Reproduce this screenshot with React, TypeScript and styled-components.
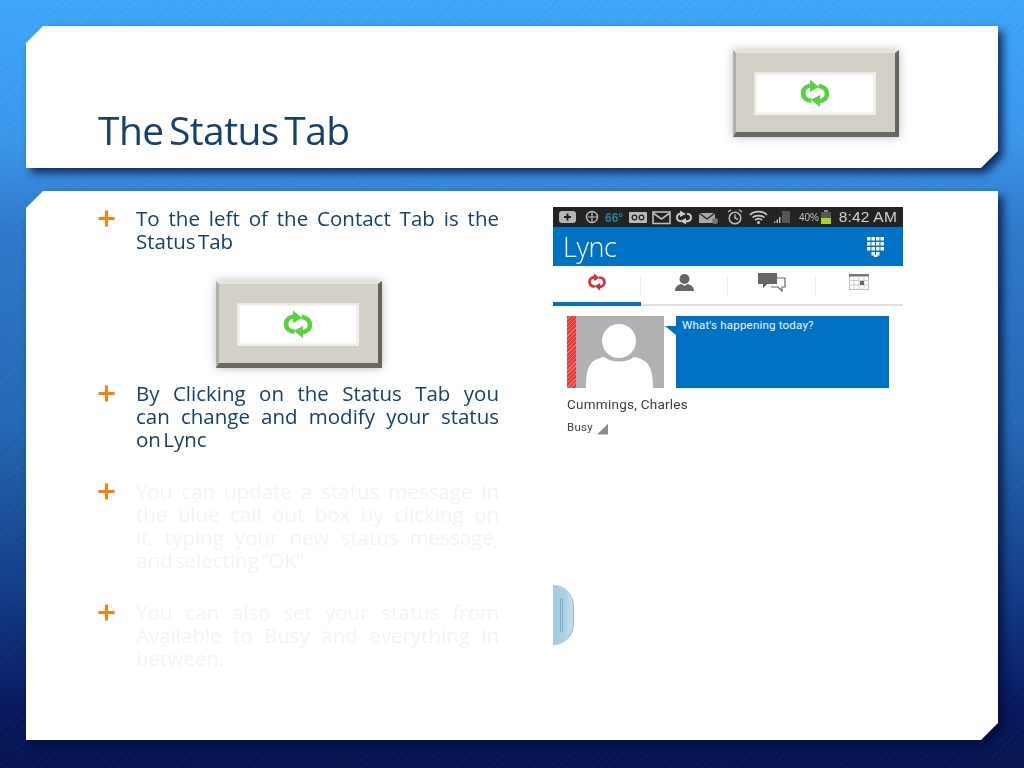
import React from "react";
import styled, { createGlobalStyle } from "styled-components";

const Global = createGlobalStyle`
  html, body { margin: 0; padding: 0; width: 1024px; height: 768px; overflow: hidden; }
  * { box-sizing: border-box; }
`;

const Stage = styled.div`
  width: 1024px;
  height: 768px;
  padding: 26px;
  display: flex;
  flex-direction: column;
  gap: 23px;
  font-family: "Open Sans", "Liberation Sans", sans-serif;
  background:
    repeating-linear-gradient(135deg, rgba(255,255,255,0.012) 0 3px, rgba(0,0,0,0.012) 3px 6px),
    linear-gradient(180deg, #3ea6fb 0%, #3b97ec 18%, #2f78cb 30%, #2468b5 55%, #123a86 78%, #07185f 92%, #061550 100%);
`;

const Shadow = styled.div`
  filter: drop-shadow(5px 5px 4px rgba(0, 10, 50, 0.75));
`;

const Card = styled.div<{ $h: number }>`
  height: ${(p) => p.$h}px;
  background: #fff;
  clip-path: polygon(17px 0, 100% 0, 100% calc(100% - 17px), calc(100% - 17px) 100%, 0 100%, 0 17px);
`;

const TitleRow = styled(Card)`
  padding: 24px 99px 0 72px;
  display: flex;
  justify-content: space-between;
`;

const Title = styled.h1`
  margin: 53px 0 0;
  font-size: 39px;
  line-height: 54px;
  font-weight: 400;
  color: #17406d;
  letter-spacing: -0.6px;
  word-spacing: -4px;
  white-space: nowrap;
`;

const Frame = styled.div`
  width: 166px;
  height: 87px;
  flex: none;
  padding: 19px 19px 17px 18px;
  background: #d3d1c7;
  border-style: solid;
  border-width: 3px 4px 5px 3px;
  border-color: #e6e4da #66655c #6a695f #b4b2a7;
  box-shadow: 0 0 9px rgba(60, 60, 60, 0.35);
`;

const Window = styled.div`
  width: 100%;
  height: 100%;
  background: #fff;
  border: 2px solid;
  border-color: #ebe9e2 #f1efe9 #f1efe9 #ebe9e2;
  box-shadow: inset 0 0 2px #d8d6cc;
  display: flex;
  align-items: center;
  justify-content: center;
`;

const Sync = ({ color, size }: { color: string; size: number }) => (
  <svg width={size} height={size * 0.9} viewBox="0 0 32 29" aria-hidden="true">
    <path d="M13.5 6.5 C 8 6.5 4 9.5 4 14 C 4 18.5 7.5 21.5 12.5 22" fill="none" stroke={color} strokeWidth="4.6" />
    <path d="M18.5 22.5 C 24 22.5 28 19.5 28 15 C 28 10.5 24.5 7.5 19.5 7" fill="none" stroke={color} strokeWidth="4.6" />
    <path d="M11 0.5 L20 8 L11 13 Z" fill={color} />
    <path d="M21 28.5 L12 21 L21 16 Z" fill={color} />
  </svg>
);

const Body = styled(Card)`
  padding: 16px 95px 0 72px;
  display: flex;
  gap: 54px;
`;

const Bullets = styled.div`
  width: 401px;
  flex: none;
`;

const Item = styled.div<{ $gap?: number }>`
  display: flex;
  margin-top: ${(p) => p.$gap ?? 0}px;
`;

const Plus = styled.svg`
  width: 17px;
  height: 17px;
  flex: none;
  margin: 3px 21px 0 0;
  color: #f5820f;
`;

const Lines = styled.div<{ $ghost?: boolean }>`
  flex: 1;
  min-width: 0;
  font-size: 20.5px;
  line-height: 23px;
  color: ${(p) => (p.$ghost ? "#f3f3f3" : "#17406d")};
`;

const Line = styled.span<{ $last?: boolean }>`
  display: block;
  white-space: nowrap;
  text-align: justify;
  text-align-last: ${(p) => (p.$last ? "left" : "justify")};
  white-space: ${(p) => (p.$last ? "nowrap" : "normal")};
  word-spacing: ${(p) => (p.$last ? "-3px" : "0")};
  height: 23px;
  overflow: visible;
`;

const ImageSlot = styled.div`
  display: flex;
  justify-content: center;
  margin: 28px 0 14px;
  padding-left: 1px;
`;

const Phone = styled.div`
  width: 350px;
  flex: none;
`;

const StatusBar = styled.div`
  height: 20px;
  background: #222322;
  display: flex;
  align-items: center;
  padding: 0 6px;
  color: #c9c9c9;
  font-family: "Liberation Sans", sans-serif;
`;

const BarIcons = styled.svg`
  width: 223px;
  height: 20px;
  flex: none;
`;

const Pct = styled.span`
  font-size: 10px;
  margin-left: 7px;
  color: #c4c4c4;
`;

const Clock = styled.span`
  font-size: 15.5px;
  margin-left: auto;
  letter-spacing: 0.2px;
  color: #d2d2d2;
`;

const Battery = styled.svg`
  width: 12px;
  height: 14px;
  flex: none;
  margin-left: 1px;
`;

const Header = styled.div`
  height: 39px;
  background: #0072c6;
  display: flex;
  align-items: center;
  justify-content: space-between;
  padding: 0 18px 0 10px;
  color: #fff;
  font-size: 27px;
  font-weight: 300;
  letter-spacing: -0.4px;
`;

const TabBar = styled.div`
  display: grid;
  grid-template-columns: repeat(4, 87.5px);
  height: 40px;
  border-bottom: 2px solid #e2e2e2;
`;

const Tab = styled.div<{ $active?: boolean }>`
  display: flex;
  align-items: center;
  justify-content: center;
  padding-bottom: 4px;
  position: relative;
  border-bottom: 4px solid ${(p) => (p.$active ? "#0072c6" : "transparent")};
  margin-bottom: -2px;
  &::after {
    content: "";
    position: absolute;
    right: 0;
    top: 10px;
    height: 19px;
    width: 1px;
    background: #ededed;
  }
  &:last-child::after { display: none; }
`;

const Profile = styled.div`
  margin: 10px 0 0 14px;
  display: flex;
  height: 72px;
`;

const Presence = styled.div`
  width: 9px;
  background: repeating-linear-gradient(135deg, #e8383c 0 2px, #f47174 2px 3px);
`;

const Avatar = styled.svg`
  width: 88px;
  height: 72px;
  flex: none;
  background: #b1b1b1;
  display: block;
`;

const Callout = styled.div`
  margin-left: 12px;
  width: 213px;
  background: #0072c6;
  color: #f1f7fb;
  font-size: 11.5px;
  padding: 2px 0 0 6px;
  position: relative;
  letter-spacing: 0.2px;
  font-family: "Roboto", sans-serif;
  &::before {
    content: "";
    position: absolute;
    left: -11px;
    top: 10px;
    border-style: solid;
    border-width: 0 0 9px 11px;
    border-color: transparent;
    border-right: 0;
    width: 0;
    height: 0;
    clip-path: polygon(0 0, 100% 0, 100% 100%);
    background: #0072c6;
    border: 0;
    width: 11px;
    height: 9px;
  }
`;

const Name = styled.div`
  margin: 8px 0 0 14px;
  font-family: "Roboto", sans-serif;
  font-size: 13.5px;
  line-height: 16px;
  color: #3c3c3c;
  letter-spacing: 0.25px;
`;

const Presencetext = styled.div`
  margin: 7px 0 0 14px;
  font-family: "Roboto", sans-serif;
  font-size: 11.5px;
  line-height: 16px;
  color: #444;
  letter-spacing: 0.3px;
  display: flex;
  align-items: center;
  gap: 4px;
`;

const Corner = styled.span`
  width: 11px;
  height: 11px;
  margin-top: 4px;
  background: #8b8b8b;
  clip-path: polygon(100% 0, 100% 100%, 0 100%);
`;

const Knob = styled.div`
  margin-top: 150px;
  width: 21px;
  height: 60px;
  border-radius: 0 30px 30px 0 / 0 30px 30px 0;
  background: linear-gradient(90deg, #a3cadf 0%, #aed2e4 60%, #c5dfec 100%);
  border-right: 1px solid #9db9c6;
  display: flex;
  align-items: center;
  padding-left: 7px;
`;

const Grip = styled.span`
  width: 3px;
  height: 34px;
  border-left: 1px solid #84aec6;
  border-right: 1px solid #84aec6;
`;

const PlusMark = () => (
  <Plus viewBox="0 0 17 17" aria-hidden="true">
    <path d="M0.5 8.5H16.5M8.5 0.5V16.5" stroke="currentColor" strokeWidth="3" fill="none" />
  </Plus>
);

const Bevel = () => (
  <Frame>
    <Window>
      <Sync color="#5ad13f" size={32} />
    </Window>
  </Frame>
);

export default function App() {
  return (
    <Stage>
      <Global />
      <Shadow>
        <TitleRow $h={142}>
          <Title>The Status Tab</Title>
          <Bevel />
        </TitleRow>
      </Shadow>
      <Shadow>
        <Body $h={549}>
          <Bullets>
            <Item>
              <PlusMark />
              <Lines>
                <Line>To the left of the Contact Tab is the</Line>
                <Line $last>Status Tab</Line>
              </Lines>
            </Item>
            <ImageSlot><Bevel /></ImageSlot>
            <Item>
              <PlusMark />
              <Lines>
                <Line>By Clicking on the Status Tab you</Line>
                <Line>can change and modify your status</Line>
                <Line $last>on Lync</Line>
              </Lines>
            </Item>
            <Item $gap={29}>
              <PlusMark />
              <Lines $ghost>
                <Line>You can update a status message in</Line>
                <Line>the blue call out box by clicking on</Line>
                <Line>it, typing your new status message,</Line>
                <Line $last>and selecting “OK”</Line>
              </Lines>
            </Item>
            <Item $gap={29}>
              <PlusMark />
              <Lines $ghost>
                <Line>You can also set your status from</Line>
                <Line>Available to Busy and everything in</Line>
                <Line $last>between.</Line>
              </Lines>
            </Item>
          </Bullets>
          <Phone>
            <StatusBar>
              <BarIcons viewBox="0 0 223 20" aria-hidden="true">
                <rect x="0" y="4" width="17" height="12" rx="3" fill="#b5b5b5" />
                <path d="M5 10H12M8.5 6.5V13.5" stroke="#222" strokeWidth="2" />
                <circle cx="33" cy="10" r="5.5" fill="none" stroke="#bbb" strokeWidth="1.4" />
                <path d="M33 5V15M29 10H38" stroke="#bbb" strokeWidth="1.2" />
                <text x="46" y="15" fontSize="12" fontWeight="700" fill="#2a7f9e" fontFamily="Liberation Sans">66°</text>
                <rect x="70" y="5" width="18" height="11" rx="1" fill="#bbb" />
                <circle cx="75.5" cy="10.5" r="2.3" fill="none" stroke="#222" strokeWidth="1.2" />
                <circle cx="82.5" cy="10.5" r="2.3" fill="none" stroke="#222" strokeWidth="1.2" />
                <rect x="94" y="5" width="17" height="11.5" fill="none" stroke="#bbb" strokeWidth="1.6" />
                <path d="M94 6L102.5 12L111 6" fill="none" stroke="#bbb" strokeWidth="1.6" />
                <path d="M123 6.5C119.5 6.5 118 8 118 10.5C118 12.5 119.5 14 122 14.2M126 14.5C130 14.5 132 13 132 10.5C132 8.500 130.500 7 128 6.800" fill="none" stroke="#c8c8c8" strokeWidth="2" />
                <path d="M121 3.500L127 7L121 10ZM127 17.500L121 14L127 11Z" fill="#c8c8c8" />
                <rect x="140" y="6" width="16" height="10" fill="#a8a8a8" />
                <path d="M140 6L148 12L156 6" fill="none" stroke="#222" strokeWidth="1.2" />
                <circle cx="156" cy="14" r="3" fill="#777" />
                <circle cx="176" cy="11" r="5.800" fill="none" stroke="#bbb" strokeWidth="1.5" />
                <path d="M176 7.500V11L179 12.500M169 5L172 2.800M183 5L180 2.800" fill="none" stroke="#bbb" strokeWidth="1.4" />
                <path d="M191 8C195 3.500 204 3.500 208 8M193.500 10.500C196 8 203 8 205.500 10.500M196 13C198 11.500 201 11.500 203 13" fill="none" stroke="#c8c8c8" strokeWidth="1.700" />
                <circle cx="199.500" cy="15.500" r="1.500" fill="#c8c8c8" />
                <path d="M215 16V14.500H216.500V16ZM217.500 16V12.500H219V16ZM220 16V10H221.500V16Z" fill="#bdbdbd" />
              </BarIcons>
              <svg width="10" height="20" viewBox="0 0 10 20" aria-hidden="true" style={{ flex: "none" }}>
                <path d="M0 16V4L8 4V16Z" fill="#555" />
              </svg>
              <Pct>40%</Pct>
              <Battery viewBox="0 0 12 14" aria-hidden="true">
                <rect x="4" y="0" width="4" height="2" fill="#8a8a8a" />
                <rect x="1" y="2" width="10" height="6" fill="#555" />
                <rect x="1" y="8" width="10" height="6" fill="#a4d81c" />
              </Battery>
              <Clock>8:42 AM</Clock>
            </StatusBar>
            <Header>
              <span>Lync</span>
              <svg width="18" height="20" viewBox="0 0 18 20" aria-hidden="true">
                {[0, 5, 10].map((y) =>
                  [0, 4.5, 9, 13.5].map((x) => <rect key={`${x}-${y}`} x={x} y={y} width="3.500" height="3.500" fill="#fff" />)
                )}
                <rect x="4.500" y="15" width="3.500" height="3.500" fill="#fff" />
                <rect x="9" y="15" width="3.500" height="3.500" fill="#fff" />
                <rect x="7" y="18" width="3.500" height="2" fill="#fff" />
              </svg>
            </Header>
            <TabBar>
              <Tab $active><Sync color="#d8343c" size={20} /></Tab>
              <Tab>
                <svg width="19" height="17" viewBox="0 0 19 17" aria-hidden="true">
                  <ellipse cx="9.500" cy="5" rx="5" ry="5" fill="#666" />
                  <path d="M0 17C0 12 4 10.500 6.500 10L9.500 12L12.500 10C15 10.500 19 12 19 17Z" fill="#666" />
                </svg>
              </Tab>
              <Tab>
                <svg width="28" height="19" viewBox="0 0 28 19" aria-hidden="true">
                  <path d="M0 0H19V11H9L5 15V11H0Z" fill="#666" />
                  <path d="M19 5H27V14H24V18L20 14H13" fill="#fff" stroke="#666" strokeWidth="1.200" />
                  <path d="M0 0H19V11H9L5 15V11H0Z" fill="#666" />
                </svg>
              </Tab>
              <Tab>
                <svg width="20" height="16" viewBox="0 0 20 16" aria-hidden="true">
                  <rect x="0.500" y="0.500" width="19" height="15" fill="#fff" stroke="#bbb" />
                  <rect x="0" y="0" width="20" height="2.500" fill="#777" />
                  <path d="M0 6.500H20M0 11H20M5 2V16M10 2V16M15 2V16" stroke="#ccc" strokeWidth="1" />
                  <rect x="11" y="7" width="4" height="4" fill="#666" />
                </svg>
              </Tab>
            </TabBar>
            <Profile>
              <Presence />
              <Avatar viewBox="0 0 88 72" aria-hidden="true">
                <circle cx="43" cy="25" r="17" fill="#fff" />
                <path d="M10 72C10 50 14 44 28 41C36 47 50 47 58 41C72 44 77 50 77 72Z" fill="#fff" />
              </Avatar>
              <Callout>What's happening today?</Callout>
            </Profile>
            <Name>Cummings, Charles</Name>
            <Presencetext>Busy<Corner /></Presencetext>
            <Knob><Grip /></Knob>
          </Phone>
        </Body>
      </Shadow>
    </Stage>
  );
}
